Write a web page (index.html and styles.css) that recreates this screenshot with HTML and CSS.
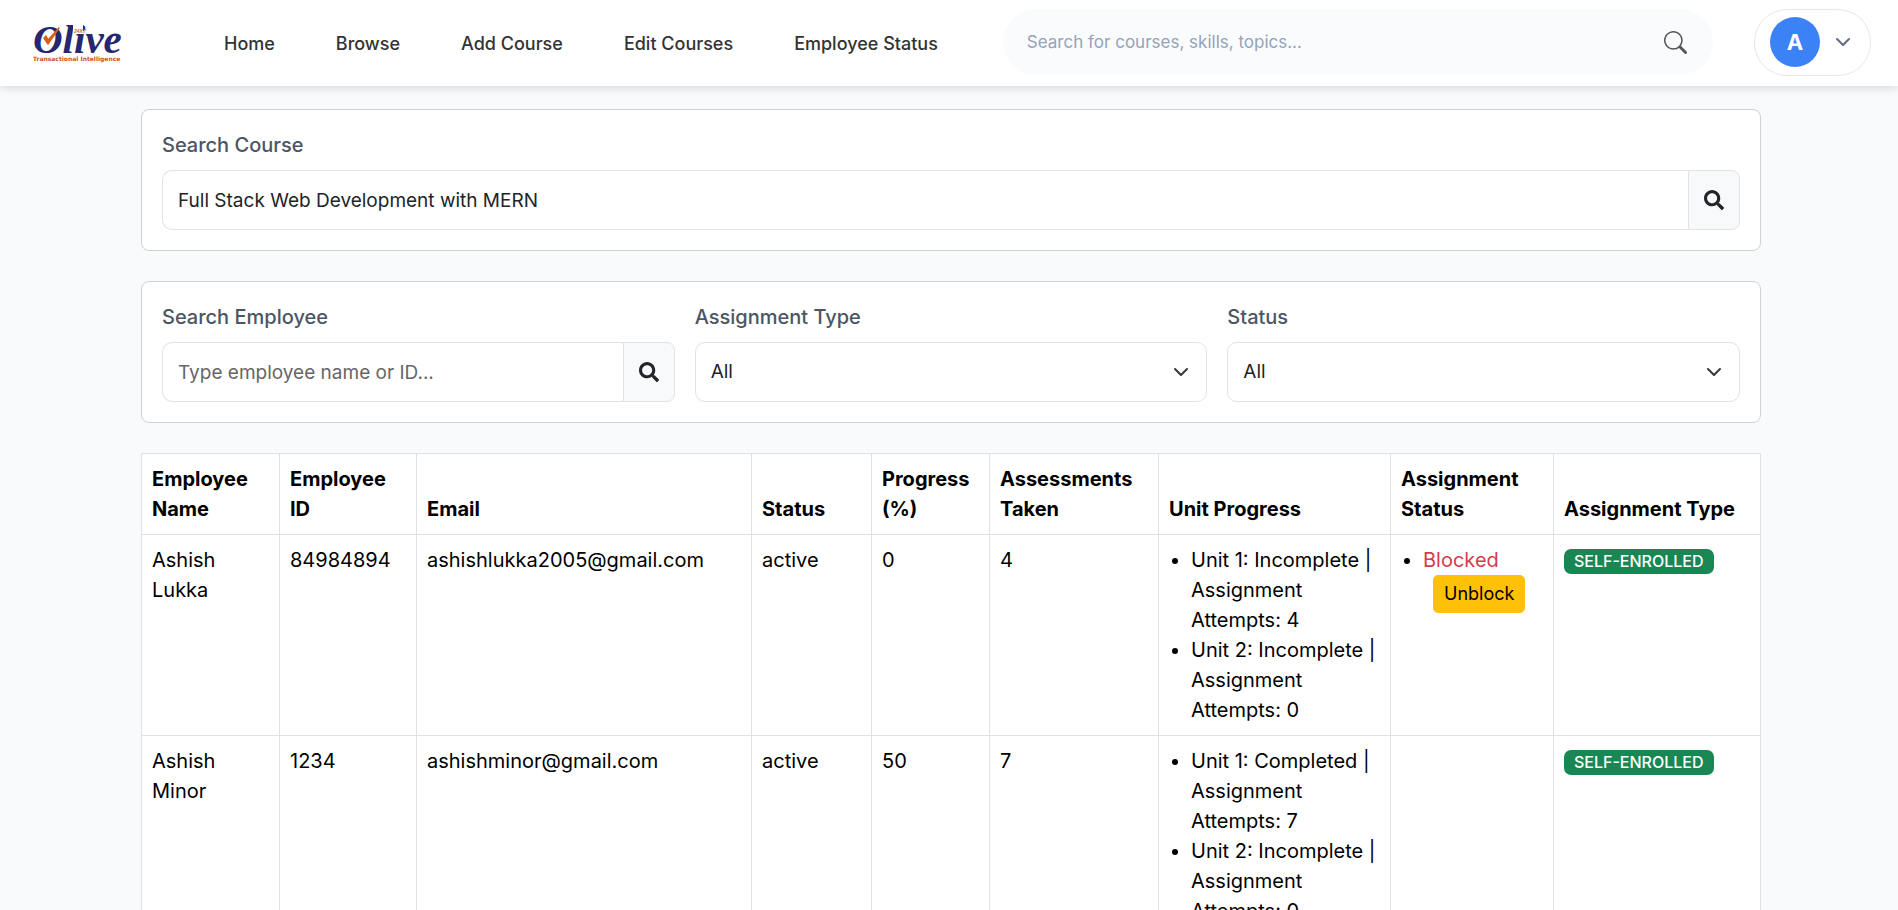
FILE: index.html
```html
<!DOCTYPE html>
<html lang="en">
<head>
<meta charset="utf-8">
<meta name="viewport" content="width=device-width, initial-scale=1">
<title>Employee Status</title>
<link rel="stylesheet" href="styles.css">
</head>
<body>
<header class="topbar">
  <a class="logo" href="#" aria-label="Olive Transactional Intelligence">
    <svg width="92" height="44" viewBox="0 0 92 44">
      <text x="0" y="33" class="logo-name">Olive</text>
      <path d="M40 5h10v7H40z" fill="#fff"/>
      <path d="M11 18l4 6L26 8l-11 12-2-4z" fill="#d9601a" stroke="#d9601a" stroke-width="1.500" stroke-linejoin="round"/>
      <text x="41" y="13" class="logo-mark">24X7</text>
      <text x="0" y="41" class="logo-tag">Transactional Intelligence</text>
    </svg>
  </a>
  <nav class="nav">
    <a href="#">Home</a>
    <a href="#">Browse</a>
    <a href="#">Add Course</a>
    <a href="#">Edit Courses</a>
    <a href="#">Employee Status</a>
  </nav>
  <form class="search" role="search">
    <input type="search" aria-label="Search" placeholder="Search for courses, skills, topics...">
    <button type="button" aria-label="Search">
      <svg width="23" height="23" viewBox="0 0 16 16" fill="currentColor"><path d="M11.742 10.344a6.500 6.500 0 1 0-1.397 1.398h-.001c.03.04.062.078.098.115l3.850 3.850a1 1 0 0 0 1.415-1.414l-3.850-3.850a1.007 1.007 0 0 0-.115-.1zM12 6.500a5.500 5.500 0 1 1-11 0 5.500 5.500 0 0 1 11 0z"/></svg>
    </button>
  </form>
  <button class="user" type="button" aria-label="Account menu">
    <span class="avatar">A</span>
    <svg width="16" height="16" viewBox="0 0 16 16" fill="none" stroke="currentColor" stroke-width="2" stroke-linecap="round" stroke-linejoin="round"><path d="M2 5 8 11 14 5"/></svg>
  </button>
</header>

<main class="page">
  <section class="card">
    <div class="field">
      <label for="course">Search Course</label>
      <div class="group">
        <input id="course" type="text" value="Full Stack Web Development with MERN">
        <button type="button" aria-label="Search course"><svg width="20" height="20" viewBox="0 0 512 512" fill="currentColor"><path d="M505 442.700 405.300 343c-4.500-4.500-10.600-7-17-7H372c27.600-35.300 44-79.700 44-128C416 93.100 322.900 0 208 0S0 93.100 0 208s93.100 208 208 208c48.300 0 92.700-16.400 128-44v16.300c0 6.400 2.500 12.500 7 17l99.700 99.700c9.400 9.400 24.600 9.400 33.900 0l28.300-28.300c9.400-9.400 9.400-24.600.1-34zM208 336c-70.700 0-128-57.200-128-128 0-70.700 57.200-128 128-128 70.700 0 128 57.200 128 128 0 70.700-57.200 128-128 128z"/></svg></button>
      </div>
    </div>
  </section>

  <section class="card filters">
    <div class="field">
      <label for="employee">Search Employee</label>
      <div class="group">
        <input id="employee" type="text" placeholder="Type employee name or ID...">
        <button type="button" aria-label="Search employee"><svg width="20" height="20" viewBox="0 0 512 512" fill="currentColor"><path d="M505 442.700 405.300 343c-4.500-4.500-10.600-7-17-7H372c27.600-35.300 44-79.700 44-128C416 93.100 322.900 0 208 0S0 93.100 0 208s93.100 208 208 208c48.300 0 92.700-16.400 128-44v16.300c0 6.400 2.500 12.500 7 17l99.700 99.700c9.400 9.400 24.600 9.400 33.900 0l28.300-28.300c9.400-9.400 9.400-24.600.1-34zM208 336c-70.700 0-128-57.200-128-128 0-70.700 57.200-128 128-128 70.700 0 128 57.200 128 128 0 70.700-57.200 128-128 128z"/></svg></button>
      </div>
    </div>
    <div class="field">
      <label for="type">Assignment Type</label>
      <select id="type"><option>All</option><option>Self-enrolled</option></select>
    </div>
    <div class="field">
      <label for="status">Status</label>
      <select id="status"><option>All</option><option>Active</option></select>
    </div>
  </section>

  <table class="report">
    <colgroup>
      <col class="c-name"><col class="c-id"><col class="c-email"><col class="c-status"><col class="c-progress"><col class="c-taken"><col class="c-unit"><col class="c-blocked"><col class="c-type">
    </colgroup>
    <thead>
      <tr>
        <th>Employee Name</th><th>Employee ID</th><th>Email</th><th>Status</th><th>Progress (%)</th><th>Assessments Taken</th><th>Unit Progress</th><th>Assignment Status</th><th>Assignment Type</th>
      </tr>
    </thead>
    <tbody>
      <tr>
        <td>Ashish Lukka</td><td>84984894</td><td>ashishlukka2005@gmail.com</td><td>active</td><td>0</td><td>4</td>
        <td><ul><li>Unit 1: Incomplete | Assignment Attempts: 4</li><li>Unit 2: Incomplete | Assignment Attempts: 0</li></ul></td>
        <td><ul><li><span class="blocked">Blocked</span> <button class="unblock" type="button">Unblock</button></li></ul></td>
        <td><span class="badge">SELF-ENROLLED</span></td>
      </tr>
      <tr>
        <td>Ashish Minor</td><td>1234</td><td>ashishminor@gmail.com</td><td>active</td><td>50</td><td>7</td>
        <td><ul><li>Unit 1: Completed | Assignment Attempts: 7</li><li>Unit 2: Incomplete | Assignment Attempts: 0</li></ul></td>
        <td></td>
        <td><span class="badge">SELF-ENROLLED</span></td>
      </tr>
    </tbody>
  </table>
</main>
</body>
</html>
```

FILE: styles.css
```css
*, *::before, *::after { box-sizing: border-box; }

body {
  margin: 0;
  background: #f9fafc;
  color: #000;
  font: 20px/30px Inter, "Liberation Sans", sans-serif;
}

input, select, button { font: inherit; color: inherit; margin: 0; }
button { cursor: pointer; }

/* Top bar */
.topbar {
  display: flex;
  align-items: center;
  height: 86px;
  padding: 0 27px 2px 33px;
  background: #fff;
  box-shadow: 0 2px 8px rgba(0, 0, 0, 0.14);
}
.logo { display: flex; margin-right: 99px; }
.logo svg { display: block; overflow: visible; }
.logo-name { font: italic 700 41px "Liberation Serif", serif; fill: #27276f; }
.logo-mark { font: italic 700 5px "Liberation Sans", sans-serif; fill: #d9601a; }
.logo-tag { font: 700 6px "DejaVu Sans", sans-serif; fill: #c8551f; }

.nav { display: flex; gap: 61px; padding-top: 4px; }
.nav a { color: #333; font-size: 18px; font-weight: 500; text-decoration: none; white-space: nowrap; }

.search {
  flex: 1;
  display: flex;
  align-items: center;
  height: 66px;
  margin: 0 41px 0 65px;
  padding: 0 26px 0 24px;
  border-radius: 33px;
  background: #fafbfd;
}
.search input {
  flex: 1;
  min-width: 0;
  padding: 0;
  border: 0;
  outline: 0;
  background: none;
  font-size: 17px;
}
.search input::placeholder { color: #94a3b8; opacity: 1; }
.search button { display: flex; padding: 0; border: 0; background: none; color: #555; }

.user {
  display: flex;
  align-items: center;
  gap: 15px;
  height: 67px;
  padding: 0 19px 0 15px;
  border: 1px solid #e5e7eb;
  border-radius: 33px;
  background: #fff;
  color: #64698a;
}
.avatar {
  width: 50px;
  height: 50px;
  border-radius: 50%;
  background: #3b82f6;
  color: #fff;
  font-size: 22px;
  font-weight: 700;
  line-height: 50px;
  text-align: center;
}

/* Filters */
.page { padding: 23px 137px 40px 141px; }
.card {
  margin-bottom: 30px;
  padding: 20px;
  border: 1px solid #cfd1d4;
  border-radius: 8px;
  background: #fff;
}
.filters { display: grid; grid-template-columns: repeat(3, 1fr); gap: 20px; }
.field { min-width: 0; }
.field label { display: block; margin-bottom: 10px; color: #4b5563; font-weight: 500; }
.group { display: flex; }
.group input, .field select {
  width: 100%;
  height: 60px;
  padding: 0 15px;
  border: 1px solid #e0e2e5;
  border-radius: 10px;
  background-color: #fff;
  color: #212529;
  font-size: 19px;
}
.group input { flex: 1; min-width: 0; border-right: 0; border-radius: 10px 0 0 10px; }
.group input::placeholder { color: #666; opacity: 1; }
.group button {
  display: flex;
  align-items: center;
  justify-content: center;
  width: 52px;
  border: 1px solid #e0e2e5;
  border-radius: 0 8px 8px 0;
  background: #f8f9fa;
  color: #212529;
}
.field select {
  appearance: none;
  background-image: url("data:image/svg+xml,%3Csvg xmlns='http://www.w3.org/2000/svg' viewBox='0 0 16 16'%3E%3Cpath fill='none' stroke='%23343a40' stroke-linecap='round' stroke-linejoin='round' stroke-width='2' d='m2 5 6 6 6-6'/%3E%3C/svg%3E");
  background-repeat: no-repeat;
  background-position: right 17px center;
  background-size: 16px;
}

/* Report */
.report { width: 100%; table-layout: fixed; border-collapse: collapse; background: #fff; }
.report th, .report td { padding: 10px; border: 1px solid #dee2e6; text-align: left; vertical-align: top; }
.report th { font-weight: 700; vertical-align: bottom; }
.report ul { margin: 0; padding-left: 22px; }
.c-name { width: 138px; }
.c-id { width: 137px; }
.c-email { width: 335px; }
.c-status { width: 120px; }
.c-progress { width: 118px; }
.c-taken { width: 169px; }
.c-unit { width: 232px; }
.c-blocked { width: 163px; }
.c-type { width: 207px; }

.blocked { color: #d63c4c; }
.unblock {
  margin-left: 10px;
  padding: 5px 10px;
  border: 1px solid #ffc107;
  border-radius: 5px;
  background: #ffc107;
  color: #000;
  font-size: 18px;
  line-height: 26px;
}
.badge {
  display: inline-block;
  padding: 5px 10px;
  border-radius: 7px;
  background: #198754;
  color: #fff;
  font-size: 16px;
  font-weight: 500;
  line-height: 15px;
}
```
